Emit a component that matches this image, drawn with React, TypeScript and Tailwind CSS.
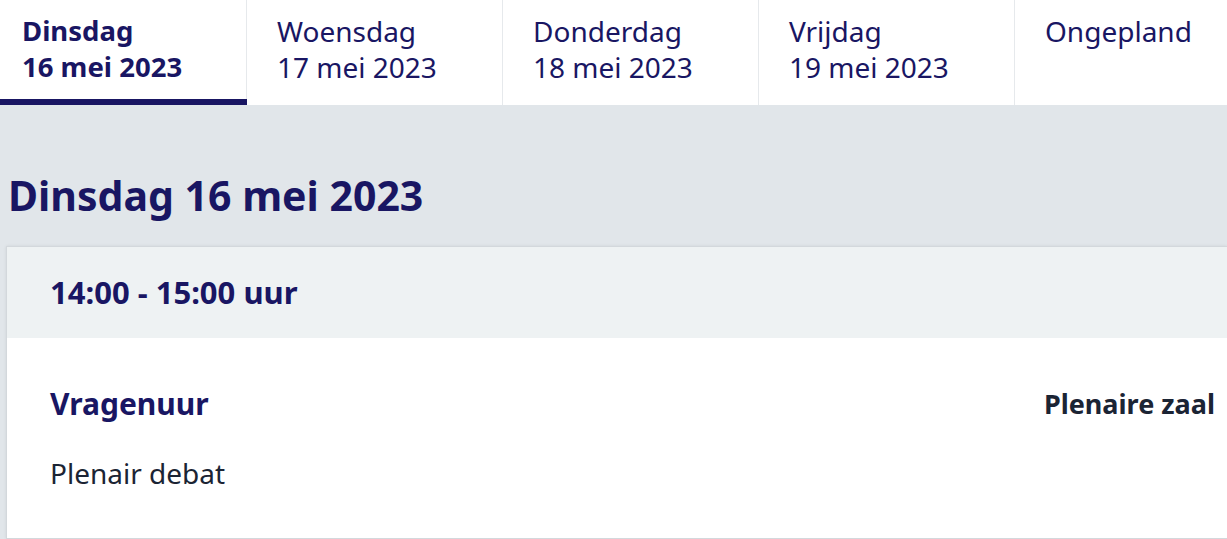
import React, { useState } from 'react';

const tabs = [
    { day: 'Dinsdag', date: '16 mei 2023' },
    { day: 'Woensdag', date: '17 mei 2023' },
    { day: 'Donderdag', date: '18 mei 2023' },
    { day: 'Vrijdag', date: '19 mei 2023' },
    { day: 'Ongepland', date: '' },
];

const App: React.FC = () => {
    const [active, setActive] = useState(0);

    return (
        <div className="min-h-screen bg-[#e1e6ea] text-[#191663]" style={{ fontFamily: '"Noto Sans", "Open Sans", sans-serif' }}>
            <nav className="flex h-[105px] bg-white overflow-hidden">
                {tabs.map((tab, i) => (
                    <button
                        key={tab.day}
                        onClick={() => setActive(i)}
                        className={`relative shrink-0 h-full flex flex-col justify-start items-start text-left pt-[13px] leading-[36px] border-r border-[#e6e9ec] ${
                            i === 0 ? 'w-[247px] pl-[22px]' : 'w-[256px] pl-[30px]'
                        } ${active === i ? 'font-bold text-[27.5px]' : 'font-normal text-[28px]'}`}
                    >
                        <span className="block">{tab.day}</span>
                        {tab.date && <span className="block">{tab.date}</span>}
                        {active === i && <span className="absolute left-0 right-[-1px] bottom-0 h-[6px] bg-[#191663]"></span>}
                    </button>
                ))}
            </nav>

            <main className="pl-[6px]">
                <h1 className="pt-[65px] pb-[26px] pl-[2px] text-[41px] leading-[50px] font-bold">
                    {tabs[active].day} {tabs[active].date}
                </h1>

                <section className="bg-white border-l border-t border-b border-[#d3d8dc] shadow-[0_0_3px_rgba(0,0,0,0.08)]">
                    <div className="h-[91px] flex items-center pl-[43px] bg-[#eef2f3]">
                        <h2 className="text-[31px] font-bold leading-none">14:00 - 15:00 uur</h2>
                    </div>
                    <div className="pl-[43px] pr-[12px] pt-[46px] pb-[47px]">
                        <div className="flex items-center justify-between">
                            <h3 className="text-[30px] font-bold leading-[40px]">Vragenuur</h3>
                            <span className="text-[27px] font-bold text-[#1b2434]">Plenaire zaal</span>
                        </div>
                        <p className="mt-[30px] text-[28px] leading-[36px] text-[#1b2434]">Plenair debat</p>
                    </div>
                </section>
            </main>
        </div>
    );
};

export default App;
